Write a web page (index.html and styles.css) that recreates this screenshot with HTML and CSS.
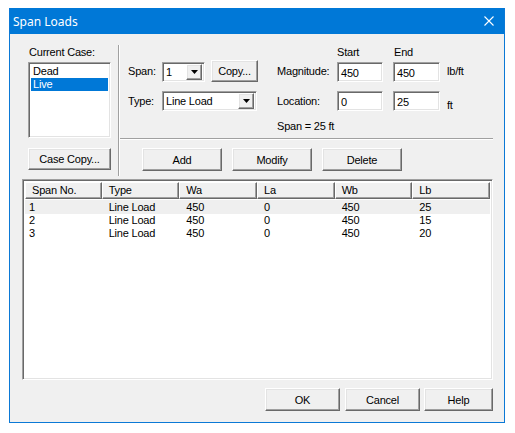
FILE: index.html
```html
<!DOCTYPE html>
<html>
<head>
<meta charset="utf-8">
<link rel="stylesheet" href="styles.css">
</head>
<body>
<div class="window">
  <div class="titlebar">
    <span class="title">Span Loads</span>
    <svg class="close" width="10" height="10" viewBox="0 0 10 10"><path d="M0.5 0.5 L9.5 9.5 M9.5 0.5 L0.5 9.5" stroke="#fff" stroke-width="1.1" fill="none"/></svg>
  </div>
  <div class="client">
    <div class="top">
      <div class="case-col">
        <div class="case-label">Current Case:</div>
        <div class="listbox sunken">
          <div class="item">Dead</div>
          <div class="item sel">Live</div>
        </div>
        <button class="btn case-copy">Case Copy...</button>
      </div>
      <div class="vsep"></div>
      <div class="panel">
        <div class="row-head"><span class="head-start">Start</span><span>End</span></div>
        <div class="row row1">
          <span class="lbl">Span:</span>
          <div class="combo combo-span sunken"><span class="combo-text">1</span><span class="drop raised"><svg width="7" height="4" viewBox="0 0 7 4"><polygon points="0,0 7,0 3.5,4" fill="#000"/></svg></span></div>
          <button class="btn copy">Copy...</button>
          <span class="lbl2">Magnitude:</span>
          <div class="field f1 sunken">450</div>
          <div class="field f2 sunken">450</div>
          <span class="unit">lb/ft</span>
        </div>
        <div class="row row2">
          <span class="lbl">Type:</span>
          <div class="combo combo-type sunken"><span class="combo-text">Line Load</span><span class="drop raised"><svg width="7" height="4" viewBox="0 0 7 4"><polygon points="0,0 7,0 3.5,4" fill="#000"/></svg></span></div>
          <span class="lbl2 lbl2-loc">Location:</span>
          <div class="field f1 sunken">0</div>
          <div class="field f2 sunken">25</div>
          <span class="unit unit-ft">ft</span>
        </div>
        <div class="row3">Span = 25 ft</div>
        <div class="hsep"></div>
        <div class="actions">
          <button class="btn act">Add</button>
          <button class="btn act">Modify</button>
          <button class="btn act">Delete</button>
        </div>
      </div>
    </div>
    <div class="listview sunken">
      <div class="lv-head">
        <div class="hc c1">Span No.</div>
        <div class="hc">Type</div>
        <div class="hc">Wa</div>
        <div class="hc">La</div>
        <div class="hc">Wb</div>
        <div class="hc">Lb</div>
      </div>
      <div class="lv-body">
        <div class="lv-row hot"><div class="cell c1">1</div><div class="cell">Line Load</div><div class="cell">450</div><div class="cell">0</div><div class="cell">450</div><div class="cell">25</div></div>
        <div class="lv-row"><div class="cell c1">2</div><div class="cell">Line Load</div><div class="cell">450</div><div class="cell">0</div><div class="cell">450</div><div class="cell">15</div></div>
        <div class="lv-row"><div class="cell c1">3</div><div class="cell">Line Load</div><div class="cell">450</div><div class="cell">0</div><div class="cell">450</div><div class="cell">20</div></div>
      </div>
    </div>
    <div class="footer">
      <button class="btn ok">OK</button>
      <button class="btn cancel">Cancel</button>
      <button class="btn help">Help</button>
    </div>
  </div>
</div>
</body>
</html>
```
FILE: styles.css
```css
* { box-sizing: border-box; }
html, body { margin: 0; padding: 0; background: #fff; }
body {
  font-family: "Liberation Sans", Arial, sans-serif;
  font-size: 11px;
  letter-spacing: -0.2px;
  color: #000;
}
.window {
  margin: 8px 0 0 9px;
  width: 496px;
  height: 415px;
  background: #f0f0f0;
  border: 1px solid #0b79d6;
  border-top: none;
}
.titlebar {
  height: 26px;
  background: #0078d7;
  display: flex;
  align-items: center;
  padding-left: 3px;
  color: #fff;
}
.title {
  font-family: "Noto Sans", "Open Sans", sans-serif;
  font-size: 12px;
  letter-spacing: 0;
}
.close { margin-left: auto; margin-right: 10px; }

.sunken {
  border: 1px solid;
  border-color: #a0a0a0 #fff #fff #a0a0a0;
  box-shadow: inset 1px 1px #696969, inset -1px -1px #e3e3e3;
  background: #fff;
}
.raised, .btn {
  border: 1px solid;
  border-color: #fff #696969 #696969 #fff;
  box-shadow: inset -1px -1px #a0a0a0, inset 1px 1px #e3e3e3;
  background: #f0f0f0;
}
.btn {
  font-family: "Liberation Sans", Arial, sans-serif;
  font-size: 11px;
  letter-spacing: -0.2px;
  color: #000;
  padding: 0;
  margin: 0;
  height: 23px;
}

.top { display: flex; padding: 12px 0 0 18px; }
.case-col { width: 83px; display: flex; flex-direction: column; }
.case-label { height: 13px; line-height: 13px; margin-bottom: 3px; padding-left: 1px; }
.listbox { height: 76px; padding: 2px; }
.item { height: 13px; line-height: 13px; padding-left: 2px; }
.item.sel { background: #0078d7; color: #fff; }
.case-copy { margin-top: 10px; height: 22px; width: 83px; }

.vsep {
  width: 2px;
  height: 131px;
  margin: -1px 0 0 7px;
  border-left: 1px solid #a0a0a0;
  border-right: 1px solid #fff;
}
.panel { width: 373px; }
.row-head { display: flex; height: 14px; line-height: 13px; padding-left: 217px; }
.head-start { width: 57px; }
.row { display: flex; align-items: center; padding-left: 8px; }
.row1 { height: 22px; }
.row2 { height: 20px; margin-top: 9px; }
.lbl { width: 34px; }
.combo {
  height: 20px;
  align-self: flex-end;
  display: flex;
  align-items: center;
  padding: 2px;
}
.combo-text { flex: 1; padding-left: 1px; line-height: 16px; }
.drop {
  width: 16px;
  height: 16px;
  display: flex;
  align-items: center;
  justify-content: center;
}
.combo-span { width: 43px; }
.combo-type { width: 95px; }
.copy { margin-left: 6px; width: 47px; height: 22px; }
.lbl2 { margin-left: 18px; width: 61px; padding-left: 1px; }
.lbl2-loc { margin-left: 19px; }
.field {
  height: 20px;
  align-self: flex-end;
  line-height: 16px;
  padding: 2px 2px 0 3px;
}
.f1 { width: 46px; }
.f2 { width: 47px; margin-left: 10px; }
.unit { margin-left: 7px; }
.unit-ft { align-self: flex-end; line-height: 13px; margin-bottom: -1px; }
.row3 { margin-top: 9px; height: 13px; line-height: 13px; padding-left: 157px; }
.hsep {
  margin-top: 5px;
  height: 2px;
  border-top: 1px solid #a0a0a0;
  border-bottom: 1px solid #fff;
}
.actions { display: flex; margin-top: 8px; padding-left: 22px; gap: 10px; }
.act { width: 80px; }

.listview {
  margin: 3px 0 0 12px;
  width: 471px;
  height: 201px;
  padding: 2px;
}
.lv-head { display: flex; height: 17px; }
.hc {
  width: 78px;
  height: 17px;
  line-height: 15px;
  padding-left: 6px;
  border: 1px solid;
  border-color: #fff #696969 #696969 #fff;
  box-shadow: inset -1px -1px #a0a0a0;
  background: #f0f0f0;
}
.hc.c1 { width: 77px; }
.lv-body { padding-top: 1px; }
.lv-row { display: flex; height: 13px; line-height: 13px; }
.lv-row.hot { background: #efefef; height: 14px; line-height: 15px; }
.cell { width: 78px; padding-left: 7px; }
.cell.c1 { width: 77px; padding-left: 4px; }

.footer { display: flex; justify-content: flex-end; margin-top: 8px; padding-right: 11px; }
.ok { width: 75px; }
.cancel { width: 75px; margin-left: 5px; }
.help { width: 69px; margin-left: 4px; }
```
